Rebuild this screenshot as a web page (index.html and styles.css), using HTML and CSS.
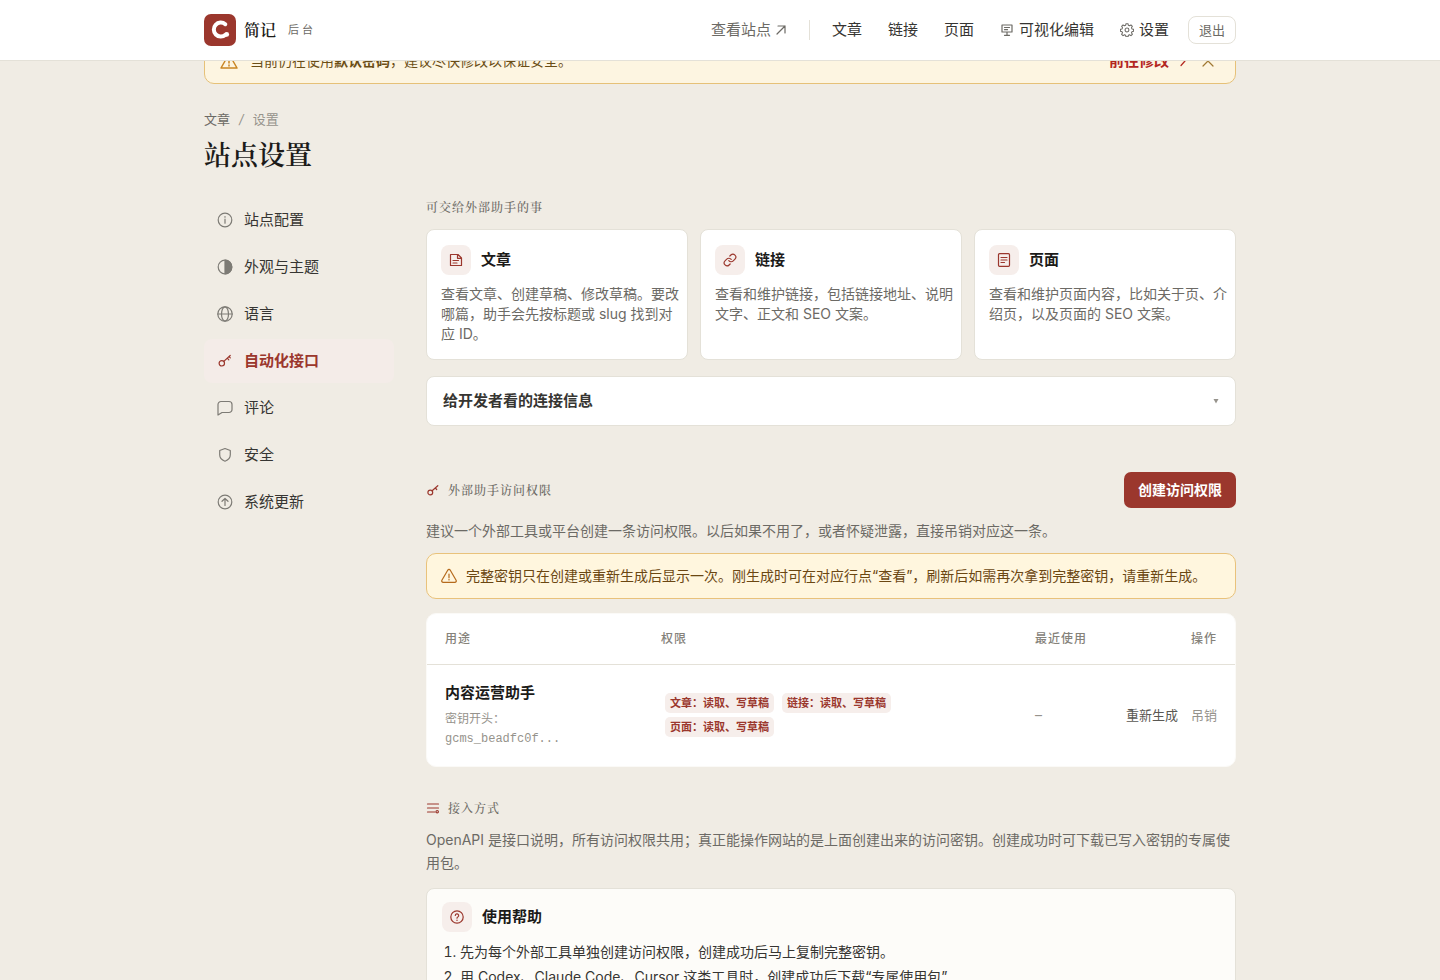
FILE: index.html
```html
<!DOCTYPE html>
<html lang="zh-CN">
<head>
<meta charset="utf-8">
<meta name="viewport" content="width=device-width, initial-scale=1">
<title>站点设置 - 简记</title>
<link rel="stylesheet" href="styles.css">
</head>
<body>
<header class="topbar">
  <div class="container topbar-inner">
    <a class="brand" href="#">
      <svg class="brand-logo" viewBox="0 0 32 32" aria-hidden="true"><rect width="32" height="32" rx="7" fill="#9b372d"/><path d="M21.300 10.200A7 7 0 1 0 21.500 20.800" fill="none" stroke="#fff" stroke-width="4" stroke-linecap="round"/><circle cx="22.700" cy="20.400" r="2.400" fill="#fff"/></svg>
      <span class="brand-name">简记</span>
      <span class="brand-sub">后台</span>
    </a>
    <nav class="nav" aria-label="主导航">
      <a class="nav-site" href="#">查看站点<svg class="ico-xs" viewBox="0 0 12 12" aria-hidden="true"><path d="M2 10 10 2M3 2h7v7"/></svg></a>
      <a href="#">文章</a>
      <a href="#">链接</a>
      <a href="#">页面</a>
      <a class="with-icon" href="#"><svg class="ico-sm" viewBox="0 0 14 14" aria-hidden="true"><path d="M2 2h10v7H2zM4.500 4.500h5M4.500 6.700h3M7 9v3M4.500 12.300h5"/></svg>可视化编辑</a>
      <a class="with-icon" href="#"><svg class="ico-sm" viewBox="0 0 24 24" aria-hidden="true"><g stroke-width="1.800"><circle cx="12" cy="12" r="3.300"/><path d="M10.300 1.500h3.400l.7 2.800 1.900.8 2.500-1.500 2.400 2.400-1.500 2.500.8 1.900 2.800.7v3.400l-2.800.7-.8 1.900 1.500 2.500-2.400 2.400-2.500-1.500-1.900.8-.7 2.800h-3.400l-.7-2.800-1.900-.8-2.500 1.500-2.400-2.400 1.500-2.500-.8-1.900-2.800-.7v-3.400l2.800-.7.8-1.900-1.500-2.500 2.400-2.400 2.500 1.500 1.900-.8z" transform="translate(0 -.3)"/></g></svg>设置</a>
      <button class="logout" type="button">退出</button>
    </nav>
  </div>
</header>

<div class="container">
  <div class="alert" role="alert">
    <svg class="ico-lg" viewBox="0 0 18 18" aria-hidden="true"><path d="M9 2 17 16H1zM9 7v4M9 13v1"/></svg>
    <span>当前仍在使用<strong>默认密码</strong>，建议尽快修改以保证安全。</span>
    <a class="alert-link" href="#">前往修改<svg class="ico-xs" viewBox="0 0 12 12" aria-hidden="true"><path d="m4 1.500 4 4.500-4 4.500"/></svg></a>
    <button class="alert-close" type="button" aria-label="关闭"><svg class="ico-sm" viewBox="0 0 14 14" aria-hidden="true"><path d="m2 2 10 10M12 2 2 12"/></svg></button>
  </div>

  <nav class="crumbs" aria-label="面包屑"><a href="#">文章</a><i>/</i><span>设置</span></nav>
  <h1>站点设置</h1>

  <div class="layout">
    <nav class="side" aria-label="设置">
      <a href="#"><svg class="ico" viewBox="0 0 16 16" aria-hidden="true"><circle cx="8" cy="8" r="6.800"/><path d="M8 7.200v4M8 4.600v.6"/></svg>站点配置</a>
      <a href="#"><svg class="ico" viewBox="0 0 16 16" aria-hidden="true"><circle cx="8" cy="8" r="6.800"/><path d="M8 1.200a6.800 6.800 0 0 1 0 13.600z" fill="currentColor"/></svg>外观与主题</a>
      <a href="#"><svg class="ico" viewBox="0 0 16 16" aria-hidden="true"><circle cx="8" cy="8" r="7.200"/><ellipse cx="8" cy="8" rx="3.500" ry="7.200"/><path d="M.8 8h14.400"/></svg>语言</a>
      <a class="active" href="#" aria-current="page"><svg class="ico" viewBox="0 0 16 16" aria-hidden="true"><circle cx="4.800" cy="10.300" r="2.700"/><path d="m6.800 8.400 6.400-5.900M10.300 5.200l1.500 1.600M12 3.600l1.300 1.300"/></svg>自动化接口</a>
      <a href="#"><svg class="ico" viewBox="0 0 16 16" aria-hidden="true"><path d="M4 1.500h8a3 3 0 0 1 3 3v5a3 3 0 0 1-3 3H5L1 15V4.500a3 3 0 0 1 3-3z"/></svg>评论</a>
      <a href="#"><svg class="ico" viewBox="0 0 16 16" aria-hidden="true"><path d="m8 1.500 5.300 2v4.300c0 3.200-2.200 5.300-5.300 6.400-3.100-1.100-5.300-3.200-5.300-6.400V3.500z"/></svg>安全</a>
      <a href="#"><svg class="ico" viewBox="0 0 16 16" aria-hidden="true"><circle cx="8" cy="8" r="6.800"/><path d="M8 11.500v-7M5 7.300l3-2.800 3 2.800"/></svg>系统更新</a>
    </nav>

    <main class="main">
      <h2 class="label">可交给外部助手的事</h2>
      <div class="cards">
        <article class="card">
          <h3><span class="tile"><svg class="ico-sm" viewBox="0 0 14 14" aria-hidden="true"><path d="M1.500 1.500h7.500l3.500 3.500v7.500h-11zM8.500 1.800v3.500h3.700M4 7.500h5.500M4 10h4"/></svg></span>文章</h3>
          <p>查看文章、创建草稿、修改草稿。要改哪篇，助手会先按标题或 slug 找到对应 ID。</p>
        </article>
        <article class="card">
          <h3><span class="tile"><svg class="ico-sm" viewBox="0 0 24 24" aria-hidden="true"><g stroke-width="2"><path d="M10 13a5 5 0 0 0 7.540.540l3-3a5 5 0 0 0-7.070-7.070l-1.720 1.710"/><path d="M14 11a5 5 0 0 0-7.540-.540l-3 3a5 5 0 0 0 7.070 7.070l1.710-1.710"/></g></svg></span>链接</h3>
          <p>查看和维护链接，包括链接地址、说明文字、正文和 SEO 文案。</p>
        </article>
        <article class="card">
          <h3><span class="tile"><svg class="ico-sm" viewBox="0 0 14 14" aria-hidden="true"><rect x="1.500" y=".7" width="11" height="12.600" rx="1"/><path d="M4 4.500h6M4 7h6M4 9.500h3.500"/></svg></span>页面</h3>
          <p>查看和维护页面内容，比如关于页、介绍页，以及页面的 SEO 文案。</p>
        </article>
      </div>

      <details class="dev"><summary>给开发者看的连接信息<svg class="caret" viewBox="0 0 6 6" aria-hidden="true"><path d="M.5 1h5L3 5.500z"/></svg></summary></details>

      <div class="section-head">
        <h2 class="label"><svg class="ico-sm" viewBox="0 0 14 14" aria-hidden="true"><circle cx="4.300" cy="9.500" r="2.400"/><path d="m6.100 7.700 5.700-5M9.300 5l1.400 1.500"/></svg>外部助手访问权限</h2>
        <button class="primary" type="button">创建访问权限</button>
      </div>
      <p class="hint">建议一个外部工具或平台创建一条访问权限。以后如果不用了，或者怀疑泄露，直接吊销对应这一条。</p>
      <div class="notice"><svg class="ico" viewBox="0 0 16 16" aria-hidden="true"><path d="M6.700 2.200.9 12.200A1.400 1.400 0 0 0 2.100 14.300h11.800a1.400 1.400 0 0 0 1.200-2.100L9.300 2.200a1.500 1.500 0 0 0-2.600 0zM8 6v3.700M8 11.400v.6"/></svg><span>完整密钥只在创建或重新生成后显示一次。刚生成时可在对应行点“查看”，刷新后如需再次拿到完整密钥，请重新生成。</span></div>

      <div class="table-card">
        <table>
          <thead><tr><th class="c-use">用途</th><th class="c-perm">权限</th><th class="c-last">最近使用</th><th class="c-ops">操作</th></tr></thead>
          <tbody><tr>
            <td><strong class="key-name">内容运营助手</strong><span class="key-prefix">密钥开头：<code>gcms_beadfc0f...</code></span></td>
            <td><div class="tags"><span>文章：读取、写草稿</span><span>链接：读取、写草稿</span><span>页面：读取、写草稿</span></div></td>
            <td class="muted">–</td>
            <td><div class="ops"><button type="button">重新生成</button><button class="muted" type="button">吊销</button></div></td>
          </tr></tbody>
        </table>
      </div>

      <h2 class="label access"><svg class="ico-sm" viewBox="0 0 14 14" aria-hidden="true"><path d="M1.500 3h11M1.500 7h11M1.500 11h7.500"/><circle cx="11.200" cy="10.700" r="1.200"/></svg>接入方式</h2>
      <p class="hint">OpenAPI 是接口说明，所有访问权限共用；真正能操作网站的是上面创建出来的访问密钥。创建成功时可下载已写入密钥的专属使用包。</p>

      <section class="card help">
        <h3><span class="tile"><svg class="ico-sm" viewBox="0 0 14 14" aria-hidden="true"><circle cx="7" cy="7" r="6.200"/><path d="M5.300 5.500a1.700 1.700 0 1 1 2.500 1.500c-.6.300-.8.600-.8 1.200M7 10v.4"/></svg></span>使用帮助</h3>
        <ol>
          <li>先为每个外部工具单独创建访问权限，创建成功后马上复制完整密钥。</li>
          <li>用 Codex、Claude Code、Cursor 这类工具时，创建成功后下载“专属使用包”</li>
        </ol>
      </section>
    </main>
  </div>
</div>
</body>
</html>
```
FILE: styles.css
```css
:root {
  --paper: #f0ece4;
  --ink: #1c1b19;
  --text: #363532;
  --soft: #6c6a65;
  --faint: #96938c;
  --line: #e4e1d8;
  --red: #9b372d;
  --blush: #f6eeeb;
  --sans: Inter, "Noto Sans CJK SC", sans-serif;
  --serif: "Noto Serif CJK SC", "Songti SC", "Liberation Serif", "Noto Sans CJK SC", serif;
}
* { box-sizing: border-box; }
html { height: 100%; overflow: hidden; }
body { margin: 0; height: 100%; overflow: hidden; background: var(--paper); color: var(--text); font: 14px/20px var(--sans); }
a { color: inherit; text-decoration: none; }
button { font: inherit; color: inherit; border: 0; background: none; padding: 0; cursor: pointer; }
h1, h2, h3, p, ol { margin: 0; }
svg { flex: none; fill: none; stroke: currentColor; stroke-width: 1.2; stroke-linecap: round; stroke-linejoin: round; }
.ico { width: 16px; height: 16px; }
.ico-sm { width: 14px; height: 14px; }
.ico-xs { width: 12px; height: 12px; }
.ico-lg { width: 18px; height: 18px; stroke-width: 1.5; }

.container { width: 100%; max-width: 1080px; margin: 0 auto; padding: 0 24px; }

.topbar { position: sticky; top: 0; z-index: 2; background: #fff; border-bottom: 1px solid var(--line); }
.topbar-inner { display: flex; align-items: center; justify-content: space-between; height: 60px; }
.brand { display: flex; align-items: center; }
.brand-logo { width: 32px; height: 32px; stroke: none; }
.brand-name { margin: 0 12px 0 8px; color: var(--ink); font: 600 16px/24px var(--serif); }
.brand-sub { color: var(--soft); font-size: 11px; letter-spacing: 3px; }
.nav { display: flex; align-items: center; gap: 26px; font-size: 15px; }
.nav-site { display: flex; align-items: center; gap: 4px; padding-right: 22px; border-right: 1px solid var(--line); color: var(--soft); margin-right: -4px; }
.with-icon { display: flex; align-items: center; gap: 5px; }
.with-icon svg { color: var(--soft); }
.logout { padding: 3px 10px; margin-left: -7px; border: 1px solid var(--line); border-radius: 8px; color: var(--soft); font-size: 13px; }

.alert { display: flex; align-items: center; gap: 12px; height: 46px; margin-top: -23px; padding: 0 20px 0 15px; border: 1px solid #e6c178; border-radius: 10px; background: #fdf5e1; color: #6b4e16; }
.alert > svg { color: #c98523; }
.alert-link { display: flex; align-items: center; gap: 8px; margin-left: auto; color: #b3261e; font-size: 15px; font-weight: 700; }
.alert-close { display: flex; color: #a07832; }

.crumbs { display: flex; gap: 9px; margin-top: 25px; color: var(--faint); font-size: 13px; }
.crumbs a { color: var(--soft); }
h1 { margin: 7px 0 26px; color: var(--ink); font: 600 27px/36px var(--serif); }

.layout { display: grid; grid-template-columns: 190px minmax(0, 1fr); gap: 32px; }
.side { display: flex; flex-direction: column; gap: 3px; font-size: 15px; }
.side a { display: flex; align-items: center; gap: 11px; height: 44px; padding: 0 13px; border-radius: 8px; }
.side svg { color: #7d7b75; }
.side .active { background: #f4ece8; color: var(--red); font-weight: 700; }
.side .active svg { color: var(--red); }

.main { padding-top: 1px; }
.label { display: flex; align-items: center; gap: 8px; color: var(--soft); font: 500 12px/16px var(--serif); letter-spacing: 1px; }
.label svg { color: var(--red); }
.cards { display: grid; grid-template-columns: repeat(3, minmax(0, 1fr)); gap: 12px; margin-top: 14px; }
.card, .dev { border: 1px solid var(--line); border-radius: 8px; background: #fff; }
.card { padding: 15px 6px 15px 14px; }
.card h3 { display: flex; align-items: center; gap: 10px; color: var(--ink); font-size: 15px; line-height: 30px; }
.tile { display: grid; place-items: center; width: 30px; height: 30px; border-radius: 8px; background: var(--blush); color: var(--red); }
.card p { margin-top: 9px; color: var(--soft); }
.dev { margin-top: 16px; }
.dev summary { display: flex; align-items: center; justify-content: space-between; height: 48px; padding: 0 16px; font-size: 15px; font-weight: 600; list-style: none; cursor: pointer; }
.caret { width: 6px; height: 6px; fill: var(--faint); stroke: none; }

.section-head { display: flex; align-items: center; justify-content: space-between; margin-top: 46px; }
.primary { height: 36px; padding: 0 14px; border-radius: 7px; background: var(--red); color: #fff; font-weight: 600; }
.hint { margin-top: 11px; color: var(--soft); line-height: 23px; }
.notice { display: flex; align-items: center; gap: 9px; min-height: 46px; margin-top: 11px; padding: 0 14px; border: 1px solid #e9c27b; border-radius: 10px; background: #fff6de; color: #6b4712; }
.notice svg { color: #b56a1c; }

.table-card { margin-top: 14px; border-radius: 10px; background: #fff; border: 1px solid #fbfaf7; overflow: hidden; }
table { width: 100%; border-collapse: collapse; table-layout: fixed; }
th, td { padding: 0 18px; text-align: left; vertical-align: middle; }
th { height: 50px; border-bottom: 1px solid var(--line); color: #85827a; font-size: 12px; font-weight: 500; letter-spacing: 1px; }
td { height: 102px; }
.c-use { width: 216px; }
.c-last { width: 110px; white-space: nowrap; }
.c-ops { width: 108px; text-align: right; }
.key-name { display: block; margin-bottom: 5px; color: var(--ink); font-size: 15px; line-height: 22px; }
.key-prefix { display: block; color: var(--faint); font-size: 12px; }
.key-prefix code { display: block; font: 12px/20px "Liberation Mono", monospace; }
.tags { display: flex; flex-wrap: wrap; gap: 4px 8px; max-width: 240px; padding-left: 4px; }
.tags span { padding: 0 5px; border-radius: 5px; background: var(--blush); color: var(--red); font-size: 11px; font-weight: 600; }
.muted { color: var(--faint); }
.ops { display: flex; justify-content: flex-end; gap: 13px; white-space: nowrap; color: #5a5853; font-size: 13px; }
.ops .muted { color: var(--faint); }

.access { margin-top: 33px; }
.access + .hint { margin-top: 12px; }
.help { margin-top: 14px; padding: 13px 15px 18px; background: #fdfcf9; }
.help ol { margin-top: 7px; padding-left: 18px; line-height: 25px; }
```
